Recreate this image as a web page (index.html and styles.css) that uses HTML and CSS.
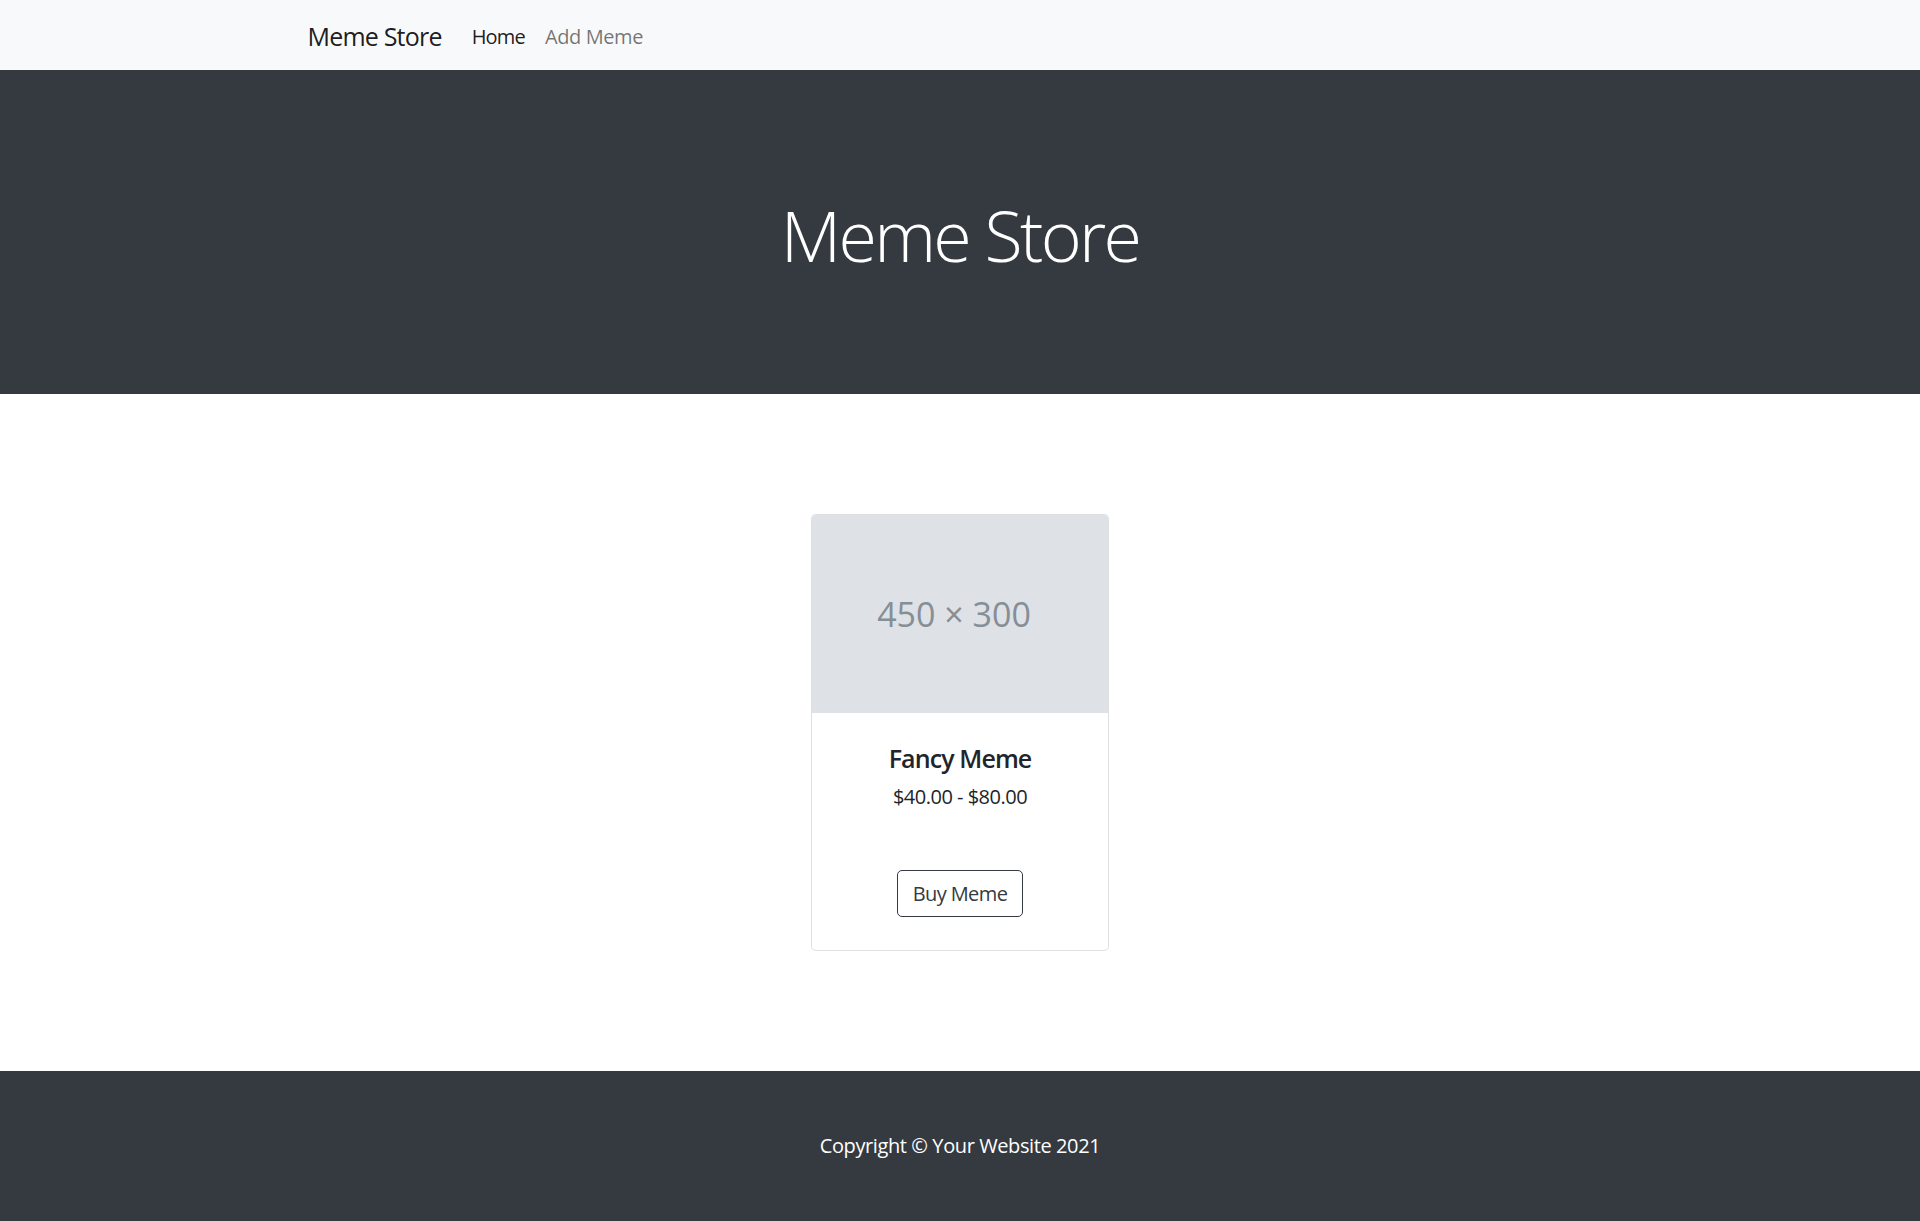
FILE: index.html
```html
<!DOCTYPE html>
<html lang="en">
<head>
<meta charset="utf-8">
<title>Meme Store</title>
<link rel="stylesheet" href="styles.css">
</head>
<body>
<nav class="navbar">
  <div class="nav-container">
    <a class="brand" href="#">Meme Store</a>
    <ul class="nav-links">
      <li><a class="nav-link active" href="#">Home</a></li>
      <li><a class="nav-link add" href="#">Add Meme</a></li>
    </ul>
  </div>
</nav>
<header class="hero">
  <h1 class="hero-title">Meme Store</h1>
</header>
<section class="products">
  <div class="card">
    <div class="card-img"><span class="card-img-text">450 × 300</span></div>
    <div class="card-body">
      <h5 class="card-title">Fancy Meme</h5>
      <div class="card-price">$40.00 - $80.00</div>
    </div>
    <div class="card-footer">
      <a class="btn" href="#">Buy Meme</a>
    </div>
  </div>
</section>
<footer class="footer">
  <p class="footer-text">Copyright © Your Website 2021</p>
</footer>
</body>
</html>
```
FILE: styles.css
```css
* { box-sizing: border-box; }
html, body { margin: 0; padding: 0; }
body {
  font-family: "Open Sans", "Noto Sans", sans-serif;
  font-size: 20px;
  line-height: 1.5;
  color: #212529;
  background: #fff;
}
a { text-decoration: none; }

.navbar {
  background: #f8f9fa;
  height: 70px;
  padding: 12px 0 8px;
}
.nav-container {
  width: 1425px;
  margin: 0 auto;
  padding: 0 60px;
  display: flex;
  align-items: center;
  height: 50px;
}
.brand {
  font-size: 25px;
  line-height: 37.5px;
  padding: 6px 0;
  margin-right: 20px;
  color: rgba(0,0,0,.9);
  letter-spacing: -0.8px;
}
.nav-links {
  list-style: none;
  margin: 0;
  padding: 0;
  display: flex;
}
.nav-link {
  display: block;
  padding: 10px 10px;
  line-height: 30px;
  color: rgba(0,0,0,.55);
  letter-spacing: -0.8px;
}
.nav-link.add { letter-spacing: -0.4px; }
.nav-link.active { color: rgba(0,0,0,.9); }

.hero {
  background: #343a40;
  padding: 123px 0 117px;
  text-align: center;
}
.hero-title {
  margin: 0;
  color: #fff;
  font-size: 70px;
  font-weight: 300;
  line-height: 84px;
  letter-spacing: -2.7px;
}

.products {
  padding: 120px 0;
  display: flex;
  justify-content: center;
}
.card {
  width: 298px;
  border: 1px solid rgba(0,0,0,.125);
  border-radius: 5px;
  background: #fff;
  display: flex;
  flex-direction: column;
}
.card-img {
  height: 198px;
  background: #dee2e6;
  border-radius: 4px 4px 0 0;
  display: flex;
  align-items: center;
  justify-content: center;
}
.card-img-text {
  font-size: 34px;
  color: #868e96;
  line-height: 1;
  margin-right: 12px;
}
.card-body {
  padding: 30px 30px 28px;
  text-align: center;
}
.card-title {
  margin: 0 0 9px;
  font-size: 25px;
  line-height: 30px;
  font-weight: 600;
  letter-spacing: -0.9px;
}
.card-price {
  font-size: 20px;
  line-height: 30px;
  letter-spacing: -0.5px;
}
.card-footer {
  padding: 30px 30px 32.5px;
  text-align: center;
}
.btn {
  display: inline-block;
  padding: 7.5px 15px;
  font-size: 20px;
  line-height: 30px;
  border: 1px solid #343a40;
  border-radius: 5px;
  color: #343a40;
  letter-spacing: -0.6px;
}

.footer {
  background: #343a40;
  padding: 60px 0;
  text-align: center;
}
.footer-text {
  margin: 0;
  color: #fff;
  line-height: 30px;
  letter-spacing: -0.4px;
}
```
